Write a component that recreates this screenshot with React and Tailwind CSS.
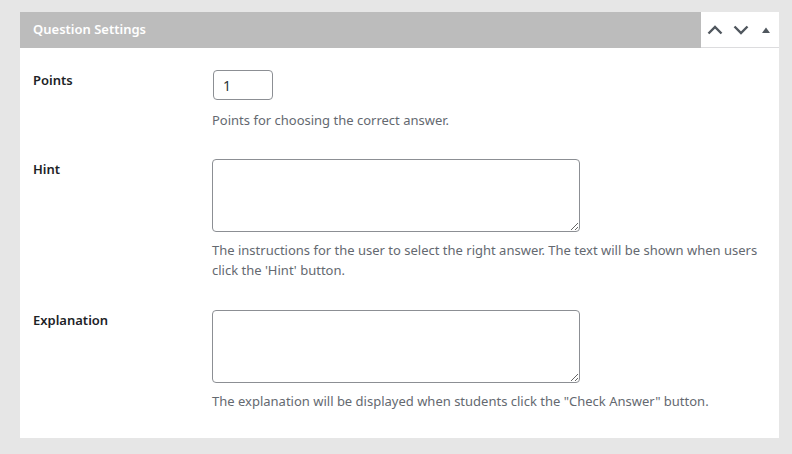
import React from "react";

const font = { fontFamily: '"Noto Sans", "Open Sans", Arial, sans-serif' };

function Chevron({ up }) {
  return (
    <svg width="16" height="10" viewBox="0 0 16 10" fill="none">
      <path
        d={up ? "M1.5 8.5 L8 2 L14.5 8.5" : "M1.5 1.5 L8 8 L14.5 1.5"}
        stroke="#50575e"
        strokeWidth="2.4"
      />
    </svg>
  );
}

function Row({ label, children, desc, className = "" }) {
  return (
    <div className={`flex ${className}`}>
      <div className="w-[179px] shrink-0 text-[13px] leading-5 font-semibold text-[#1d2327]">
        {label}
      </div>
      <div className="flex-1 flex flex-col items-start">
        {children}
        {desc}
      </div>
    </div>
  );
}

export default function App() {
  return (
    <div
      className="min-h-screen bg-[#e6e6e6] pt-3 pl-5 pr-[13px] pb-4"
      style={font}
    >
      <div className="bg-white w-[759px]">
        <div className="flex h-[36px]">
          <div className="flex-1 bg-[#bcbcbc] flex items-center pl-[13px] text-white text-[13px] font-semibold">
            Question Settings
          </div>
          <div className="w-[78px] flex items-center border-b border-[#dcdcde]">
            <button className="w-[27px] flex justify-center">
              <Chevron up />
            </button>
            <button className="w-[25px] flex justify-center">
              <Chevron />
            </button>
            <button className="w-[26px] flex justify-center">
              <svg width="10" height="6" viewBox="0 0 10 6">
                <path d="M1 6 L5 0.5 L9 6 Z" fill="#50575e" />
              </svg>
            </button>
          </div>
        </div>

        <div className="pl-[13px] pt-[22px] pb-[27px]">
          <Row
            label="Points"
            desc={
              <p className="mt-[10px] text-[13px] leading-5 text-[#646970]">
                Points for choosing the correct answer.
              </p>
            }
          >
            <input
              type="text"
              defaultValue="1"
              className="ml-px w-[60px] h-[30px] border border-[#8c8f94] rounded-[4px] px-[9px] text-[14px] text-[#2c3338]"
            />
          </Row>

          <Row
            label="Hint"
            className="mt-[29px]"
            desc={
              <p className="mt-[8px] pr-[14px] text-[13px] leading-5 text-[#646970]">
                The instructions for the user to select the right answer. The
                text will be shown when users click the 'Hint' button.
              </p>
            }
          >
            <textarea className="block w-[368px] h-[73px] border border-[#8c8f94] rounded-[4px] resize" />
          </Row>

          <Row
            label="Explanation"
            className="mt-[30px]"
            desc={
              <p className="mt-[8px] text-[13px] leading-5 text-[#646970]">
                The explanation will be displayed when students click the
                "Check Answer" button.
              </p>
            }
          >
            <textarea className="block w-[368px] h-[73px] border border-[#8c8f94] rounded-[4px] resize" />
          </Row>
        </div>
      </div>
    </div>
  );
}
